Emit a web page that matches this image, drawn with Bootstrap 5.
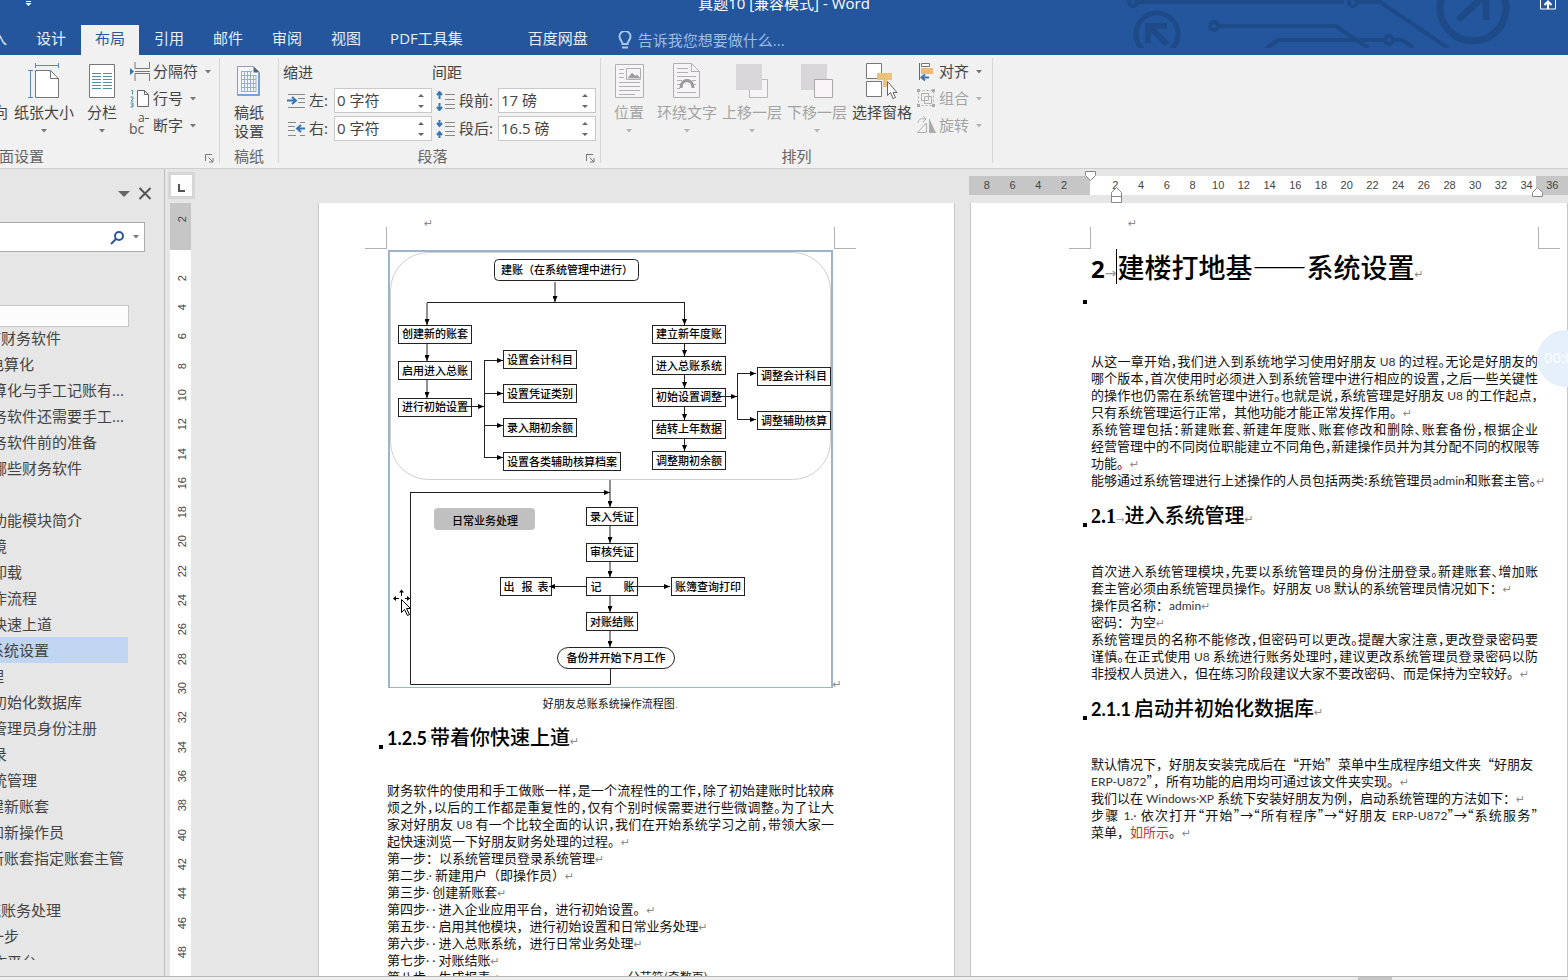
<!DOCTYPE html>
<html lang="zh-CN">
<head>
<meta charset="utf-8">
<meta name="viewport" content="width=device-width, initial-scale=1">
<title>真题10 [兼容模式] - Word</title>
<link href="https://cdn.jsdelivr.net/npm/bootstrap@5.3.0/dist/css/bootstrap.min.css" rel="stylesheet">
<style>
body{font-family:"Open Sans","Noto Sans CJK SC",sans-serif;font-size:15px;line-height:19px;color:#444;background:#e6e6e6}
svg{display:block;flex:none}
button,input{font:inherit;color:inherit}
button{border:0;background:none;padding:0;white-space:nowrap}
/* title bar and tabs */
.topbar{background:#24569e;color:#fff;height:55px}
.deco{right:0;top:0}
.titleline{height:25px;line-height:7px}
.titleline .win{right:12px;top:0}
.qat{left:24px;top:0}
.tabs{gap:1px;margin-left:-37px;height:30px}
.tabs a{color:#e4eefb;text-decoration:none;padding:4px 14px 0;white-space:nowrap}
.tabs a.active{background:#f1f1f1;color:#2b579a}
.tabs .extra{margin-left:36px}
.tell{color:#9dbce6;margin-left:15px;gap:6px}
/* ribbon */
.ribbon{background:#f1f1f1;border-bottom:1px solid #cdcdcd;height:114px}
.grp{border-right:1px solid #d5d5d5;margin:3px 0 5px}
.grp-page{width:220px}
.grp-para{width:322px}
.grp-arr{width:392px}
.gbody{height:87px}
.glabel{height:20px;padding-top:2px;color:#666}
.glabel .cutl{margin-left:-16px}
.launch{margin:5px 5px 0 0}
.big{display:flex;flex-direction:column;align-items:center;padding-top:5px;width:60px;flex-shrink:0}
.big svg.ic{margin-bottom:4px}
.big .car{margin-top:7px}
.w56{width:56px}
.w58{width:58px}
.offleft{margin:0 6px 0 -52px}
.off{color:#a3a3a3}
.stackrow{gap:5px}
.stackrow .w56{margin-right:-5px}
.small-col button{display:flex;align-items:center;height:27px;gap:3px}
.car{width:6px;height:4px;fill:#777}
.off .car{fill:#b4b4b4}
.head-lab{height:30px;line-height:28px}
.indent{padding-left:4px;width:153px}
.spacing{width:164px}
.field{height:25px;margin-bottom:3px}
.field>svg{margin-left:4px}
.field label{margin-left:4px}
.spin{width:98px;border:1px solid #c9c9c9;background:#fff}
.spin input{border:0;outline:0;width:78px;padding:0 0 0 2px;background:none}
/* navigation pane */
.navpane{width:165px;border-right:1px solid #bdbdbd;padding-bottom:16px}
.panehead{height:32px}
.searchbox{height:30px;width:145px;border:1px solid #ababab;border-left:0;background:#fff;margin-top:22px}
.searchbox input{width:108px;border:0;outline:0;background:none}
.searchbox .car{margin:0 5px 0 8px}
.outline-root{width:129px;height:22px;border:1px solid #c6c6c6;border-left:0;background:#fcfcfc;margin-top:53px}
.outline{margin-top:-2px}
.outline a{display:block;height:26px;line-height:26px;color:#444;text-decoration:none;white-space:nowrap;width:128px;text-indent:-8px}
.outline a.d2{text-indent:-11px}
.outline a.d3{text-indent:-14px}
.outline a.sel{background:#c0d5f1}
/* rulers */
.rul{font:11px "Liberation Sans",sans-serif;color:#444}
.tabsel{width:27px;height:27px;border:3px solid #d6d6d6;background:#fdfdfd;margin:3px 0 0 3px}
.topstrip{height:34px}
.hrul{margin:7px 0 0 774px;height:19px;padding:0 3px 0 5px;background:linear-gradient(90deg,#c6c6c6 0 121px,#fff 121px calc(100% - 32px),#c6c6c6 calc(100% - 32px))}
.hrul span{flex:1 1 0;text-align:center;line-height:18px}
.marks{left:0;top:-5px}
.vrul{width:21px;margin-left:5px;padding:2px 0 9px 3px;background:linear-gradient(#c6c6c6 0 47px,#fff 47px)}
.vrul span{flex:1 1 0;writing-mode:vertical-rl;transform:rotate(180deg);text-align:center;line-height:19px}
/* pages */
.sheet{background:#fff;border:solid #c6c6c6;border-width:0 1px;color:#111;overflow:hidden;font:13px/17px "Noto Sans CJK SC",sans-serif}
.sheet-a{width:637px;margin-left:127px;padding-left:68px}
.sheet-b{margin-left:15px;padding-left:120px}
.txt{width:447px}
.corners{width:491px;margin-left:-22px;height:46px;padding-top:14px}
.corners i{width:22px;height:22px;border:0 solid #b0b0b0;align-self:flex-end}
.corners i.l{border-width:0 1px 1px 0}
.corners i.r{border-width:0 0 1px 1px}
.corners .ret{margin-left:37px;line-height:13px}
.ret{font:11px/0 "DejaVu Sans",sans-serif;color:#8a8a8a}
.sheet p{margin:0;white-space:nowrap}
.full{display:block;text-align:justify;text-align-last:justify;font-feature-settings:"halt"}
.wide{display:block}
.lt{font-family:Lato,sans-serif;font-size:12px;line-height:0;color:#333}
.sheet h1,.sheet h2,.sheet h3{position:relative;margin:0;font-size:20px;line-height:24px;font-weight:500;white-space:nowrap;color:#000}
.sheet h2,.sheet h3{margin:15px 0 35px}
.sheet-a h3{margin:13px 0 32px}
.sheet h1{font-size:27px;line-height:36px;height:36px;margin-bottom:67px}
.num{font:700 18px/0 Lato,sans-serif}
.num-serif{font:700 20px/0 "Liberation Serif",serif}
.num-big{font:700 24px/0 "Open Sans",sans-serif}
.tab{font:10px/0 "DejaVu Sans",sans-serif;color:#999}
h1 .tab{font-size:14px}
.dot{position:absolute;left:-8px;top:20px;width:4px;height:4px;background:#000}
.sheet h1 .dot{top:51px}
.caret-bar{display:inline-block;width:1px;height:35px;background:#000;vertical-align:top}
.sheet .cap{font-size:11px;width:447px;text-align:center;margin-top:6px}
.red{color:#c0392b}
.brk{font-size:12px;line-height:0;margin-left:128px}
.flow text{font:500 11px "Noto Sans CJK SC",sans-serif;text-anchor:middle;fill:#000}
.flow text.ret{font:11px "DejaVu Sans",sans-serif;fill:#8a8a8a}
.flow .bx{fill:#fff;stroke:#222}
.flow .ln{fill:none;stroke:#222}
.timer{right:-26px;top:330px;width:57px;height:57px;border-radius:50%;background:#e6f0fb;color:#fff;padding:18px 0 0 7px;line-height:19px}
.foot{height:4px;background:#ededed;border-top:1px solid #b8b8b8}
.foot div{width:34px;margin-right:176px;background:#c4c4c4}
</style>
</head>
<body>
<svg width="0" height="0" class="position-absolute" aria-hidden="true"><defs>
<symbol id="car" viewBox="0 0 6 4"><path d="M0 0h6L3 3.5z"/></symbol>
<symbol id="launch" viewBox="0 0 9 9"><path d="M.5 7V.5H7M3.500 3.500l4 4M8 4v4H4" fill="none" stroke="#777"/></symbol>
<symbol id="spin" viewBox="0 0 18 23"><path d="M5 8l3-3 3 3zM5 16l3 3 3-3z" fill="#666"/></symbol>
</defs></svg>
<div class="vh-100 d-flex flex-column overflow-hidden position-relative">
<header class="topbar position-relative overflow-hidden flex-shrink-0">
  <svg class="deco position-absolute" width="488" height="48" viewBox="0 0 488 48" fill="none" stroke="#1e4a87" stroke-width="4">
    <circle cx="77" cy="34" r="21" stroke-width="5"/><path d="M87 44L69 26" stroke-width="6"/><path d="M68 43V26h19" stroke-width="6"/>
    <circle cx="53" cy="2" r="4"/><path d="M58 2h206M278 2h22l68 46"/><circle cx="273" cy="2" r="4"/>
    <circle cx="134" cy="26" r="4"/><path d="M139 26h117l32 22M184 50l14-10h107M314 40h8l12 8"/><circle cx="309" cy="40" r="4"/>
    <circle cx="393" cy="8" r="33" stroke-width="7"/><path d="M378 20L406-6M406-10v30" stroke-width="7"/>
  </svg>
  <div class="titleline d-flex justify-content-center position-relative">
    <svg class="qat position-absolute" width="9" height="7" viewBox="0 0 9 7"><path d="M2 1h5v1H2zM1.500 3h6l-3 3z" fill="#fff"/></svg>
    <span>真题10 [兼容模式] - Word</span>
    <svg class="win position-absolute" width="16" height="10" viewBox="0 0 16 10" fill="none" stroke="#fff"><path d="M.5 0v9h15V0"/><path d="M8 9V2M4.500 5L8 1.500 11.500 5" stroke-width="2"/></svg>
  </div>
  <nav class="tabs d-flex position-relative">
    <a href="#">插入</a><a href="#">设计</a><a href="#" class="active">布局</a><a href="#">引用</a><a href="#">邮件</a><a href="#">审阅</a><a href="#">视图</a><a href="#">PDF工具集</a><a href="#" class="extra">百度网盘</a>
    <button class="tell d-flex align-items-center"><svg width="14" height="19" viewBox="0 0 14 19" fill="none" stroke="#a9c6ee" stroke-width="2"><path d="M4.500 13c0-3-3-4-3-7.500a5.500 5.500 0 0 1 11 0c0 3.500-3 4.500-3 7.500zM4 16.500h6"/></svg>告诉我您想要做什么...</button>
  </nav>
</header>

<section class="ribbon d-flex flex-shrink-0">
  <div class="grp grp-page">
    <div class="gbody d-flex">
      <button class="big offleft"><svg class="ic" width="30" height="36"></svg>纸张方向</button>
      <button class="big"><svg class="ic" width="32" height="36" viewBox="0 0 32 36" fill="none"><path d="M7 2.500h24M7.500 0v5M30.500 0v5M2.500 7v28M0 7.500h5M0 34.500h5" stroke="#5b87b5"/><path d="M7.500 7.500h15l8 8v19h-23z" fill="#fff" stroke="#777"/><path d="M22.500 7.500v8h8" stroke="#777"/></svg>纸张大小<svg class="car"><use href="#car"/></svg></button>
      <button class="big w56"><svg class="ic" width="28" height="36" viewBox="0 0 28 36" fill="none"><path d="M1.500 1.500h25v33h-25z" fill="#fff" stroke="#777"/><path d="M4 10.500h9M4 13.500h9M4 16.500h9M4 19.500h9M4 22.500h9M4 25.500h9M15 10.500h9M15 13.500h9M15 16.500h9M15 19.500h9M15 22.500h9M15 25.500h9" stroke="#4f91a5"/></svg>分栏<svg class="car"><use href="#car"/></svg></button>
      <div class="small-col">
        <button><svg width="20" height="19" viewBox="0 0 20 19" fill="none"><path d="M5 0v6.500h14.500V0M5 19v-7.500h14.500V19M5 9.500h15" stroke="#777"/><path d="M0 6l4 3.500L0 13z" fill="#2f6fab"/></svg>分隔符<svg class="car ms-1"><use href="#car"/></svg></button>
        <button><svg width="20" height="19" viewBox="0 0 20 19" fill="none"><path d="M7.500 1.500h7l4 4v12h-11z" fill="#fff" stroke="#666"/><path d="M14.500 1.500v4h4" stroke="#666"/><path d="M1 1.500h1.500v4M.5 8h2.500v2l-2 2h2.500M.5 14h2.500v4H.5M1 16h2" stroke="#4f91a5"/></svg>行号<svg class="car ms-1"><use href="#car"/></svg></button>
        <button><svg width="20" height="19" viewBox="0 0 20 19" fill="#555" overflow="visible" font-family="Open Sans,sans-serif"><text x="-1" y="18" font-size="14">bc</text><text x="8" y="6" font-size="12">a</text><path d="M15 2h4v1h-4z"/></svg>断字<svg class="car ms-1"><use href="#car"/></svg></button>
      </div>
    </div>
    <div class="glabel d-flex justify-content-between"><span class="cutl">页面设置</span><button class="launch" aria-label="页面设置选项"><svg width="9" height="9"><use href="#launch"/></svg></button></div>
  </div>
  <div class="grp">
    <div class="gbody"><button class="big w58"><svg class="ic" width="24" height="36" viewBox="0 0 24 36" fill="none"><path d="M.5 3.500h16l6 6v23H.5z" fill="#f4f8fd" stroke="#8f9bb0"/><path d="M22 10v22H1" stroke="#7ba0d8" stroke-width="2"/><path d="M16.500 3.500v6h6z" fill="#55637c"/><path d="M4 8.500h11M4 12.500h15M4 16.500h15M4 20.500h15M4 24.500h15M4 28.500h15M4.500 8v21M7.500 8v21M10.500 8v21M13.500 8v21M16.500 12v17M19 12v17" stroke="#98acd0"/></svg><span>稿纸<br>设置</span></button></div>
    <div class="glabel text-center">稿纸</div>
  </div>
  <div class="grp grp-para">
    <div class="gbody d-flex">
      <div class="indent">
        <div class="head-lab">缩进</div>
        <div class="field d-flex align-items-center"><svg width="18" height="16" viewBox="0 0 18 16" fill="none"><path d="M1 1.500h17M11 5.500h7M11 9.500h7M1 14.500h17" stroke="#888"/><path d="M0 7.500h8M5 4l4 3.500L5 11" stroke="#3a76b4" stroke-width="2"/></svg><label for="il">左:</label><div class="spin d-flex ms-auto"><input id="il" value="0 字符"><svg width="18" height="23"><use href="#spin"/></svg></div></div>
        <div class="field d-flex align-items-center"><svg width="18" height="16" viewBox="0 0 18 16" fill="none"><path d="M1 1.500h8M13 1.500h5M1 5.500h7M1 9.500h7M1 14.500h8M13 14.500h5" stroke="#888"/><path d="M18 7.500h-7M14 4l-4 3.500L14 11" stroke="#3a76b4" stroke-width="2"/></svg><label for="ir">右:</label><div class="spin d-flex ms-auto"><input id="ir" value="0 字符"><svg width="18" height="23"><use href="#spin"/></svg></div></div>
      </div>
      <div class="spacing">
        <div class="head-lab">间距</div>
        <div class="field d-flex align-items-center"><svg width="19" height="20" viewBox="0 0 19 20" fill="none"><path d="M9 3.500h10M9 8.500h10M9 13.500h10M9 17.500h10" stroke="#888"/><path d="M3.500 1v7M3.500 12v7M1 4l2.500-3L6 4M1 16l2.500 3L6 16" stroke="#3a76b4" stroke-width="2"/></svg><label for="sb">段前:</label><div class="spin d-flex ms-auto"><input id="sb" value="17 磅"><svg width="18" height="23"><use href="#spin"/></svg></div></div>
        <div class="field d-flex align-items-center"><svg width="19" height="20" viewBox="0 0 19 20" fill="none"><path d="M9 3.500h10M9 7.500h10M9 12.500h10M9 16.500h10" stroke="#888"/><path d="M3.500 1v6M3.500 13v6M1 4l2.500 3L6 4M1 16l2.500-3L6 16" stroke="#3a76b4" stroke-width="2"/></svg><label for="sa">段后:</label><div class="spin d-flex ms-auto"><input id="sa" value="16.5 磅"><svg width="18" height="23"><use href="#spin"/></svg></div></div>
      </div>
    </div>
    <div class="glabel d-flex justify-content-end"><span class="mx-auto">段落</span><button class="launch" aria-label="段落选项"><svg width="9" height="9"><use href="#launch"/></svg></button></div>
  </div>
  <div class="grp grp-arr">
    <div class="gbody d-flex stackrow">
      <button class="big off w56"><svg class="ic" width="30" height="36" viewBox="0 0 30 36" fill="none" stroke="#b0b0b0"><path d="M1.500 1.500h28v33h-28z" fill="#f6f4f6"/><path d="M12.500 5.500h14v11h-14z"/><path d="M14 15l4-5 3 3 2-1 3 3z" fill="#999"/><path d="M5 6.500h5M5 10.500h5M5 14.500h5M5 19.500h21M5 23.500h21M5 27.500h21M5 31.500h16"/></svg>位置<svg class="car"><use href="#car"/></svg></button>
      <button class="big off"><svg class="ic" width="28" height="36" viewBox="0 0 28 36" fill="none" stroke="#b0b0b0"><path d="M.5.500h18l8 8v26H.5z" fill="#f6f4f6"/><path d="M18.500.500v8h8M4 5.500h11M4 9.500h11M4 13.500h19M4 17.500h5M19 17.500h4M4 21.500h3M4 25.500h3M21 21.500h2M4 29.500h19"/><path d="M8 25c0-10 12-10 12 0" stroke="#999" stroke-width="3"/></svg>环绕文字<svg class="car"><use href="#car"/></svg></button>
      <button class="big off"><svg class="ic" width="32" height="36" viewBox="0 0 32 36"><path d="M13.500 16.500h18v18h-18z" fill="#f6f4f6" stroke="#b8b8b8"/><path d="M0 1h26v26H0z" fill="#d8d6d8"/></svg>上移一层<svg class="car"><use href="#car"/></svg></button>
      <button class="big off"><svg class="ic" width="32" height="36" viewBox="0 0 32 36"><path d="M0 1h26v26H0z" fill="#d8d6d8"/><path d="M13.500 16.500h18v18h-18z" fill="#f8f4f8" stroke="#a8a8a8"/></svg>下移一层<svg class="car"><use href="#car"/></svg></button>
      <button class="big"><svg class="ic" width="32" height="36" viewBox="0 0 32 36"><path d="M.5.500h15v15H.5zM.5 18.500h15v15H.5z" fill="#fff" stroke="#777"/><path d="M11 10h15v7H11zM17 17h4v7h-4z" fill="#efc178"/><path d="M21.500 18.500v14l3-3 2.500 6 2.500-1-2.500-5h4z" fill="#fff" stroke="#666"/></svg>选择窗格</button>
      <div class="small-col">
        <button><svg width="19" height="19" viewBox="0 0 19 19" fill="none"><path d="M2.500 1v17" stroke="#666"/><path d="M4.500 1.500h8v3h-8z" fill="#fff" stroke="#777"/><path d="M4 6h12v6H4z" fill="#efb978"/><path d="M5 15.500h7M8 12.500l-3.500 3L8 18.500" stroke="#3a76b4" stroke-width="2"/></svg>对齐<svg class="car ms-1"><use href="#car"/></svg></button>
        <button class="off"><svg width="19" height="19" viewBox="0 0 19 19" fill="none" stroke="#b0b0b0"><path d="M1.500 1.500h15v15h-15z" stroke-dasharray="2 2"/><path d="M4.500 4.500h7v7h-7zM7.500 7.500h7v7h-7z"/><path d="M0 0h3v3H0zM15 0h3v3h-3zM0 15h3v3H0zM15 15h3v3h-3z" fill="#aaa" stroke="none"/></svg>组合<svg class="car ms-1"><use href="#car"/></svg></button>
        <button class="off"><svg width="19" height="19" viewBox="0 0 19 19" fill="none" stroke="#b0b0b0"><path d="M9.500 7v9.500H.500zM1 7c0-4 4-5 7-4M6 0l3 3-3 3"/><path d="M12 2v15h7z" fill="#aaa" stroke="none"/></svg>旋转<svg class="car ms-1"><use href="#car"/></svg></button>
      </div>
    </div>
    <div class="glabel text-center">排列</div>
  </div>
</section>

<main class="d-flex flex-fill overflow-hidden">
  <aside class="navpane flex-shrink-0 d-flex flex-column overflow-hidden">
    <div class="panehead d-flex justify-content-end align-items-end pe-2">
      <button aria-label="窗格选项"><svg width="12" height="13" viewBox="0 0 12 13"><path d="M0 4h12l-6 6z" fill="#666"/></svg></button>
      <button aria-label="关闭" class="ms-2 me-1"><svg width="14" height="13" viewBox="0 0 14 13"><path d="M1.500 1l11 11M12.500 1l-11 11" stroke="#555" stroke-width="2"/></svg></button>
    </div>
    <div class="searchbox d-flex align-items-center flex-shrink-0"><input aria-label="搜索文档"><svg class="ms-auto" width="15" height="15" viewBox="0 0 15 15" fill="none" stroke="#2f5496" stroke-width="2"><circle cx="9" cy="6" r="4"/><path d="M6 9l-5 5"/></svg><svg class="car"><use href="#car"/></svg></div>
    <div class="outline-root flex-shrink-0"></div>
    <nav class="outline overflow-hidden">
      <a href="#" class="d3">何财务软件</a><a href="#" class="d2">电算化</a><a href="#">算化与手工记账有...</a><a href="#">务软件还需要手工...</a><a href="#">务软件前的准备</a><a href="#">哪些财务软件</a><a href="#">&nbsp;</a><a href="#">功能模块简介</a><a href="#">境</a><a href="#">卸载</a><a href="#">作流程</a><a href="#">快速上道</a><a href="#" class="d2 sel">系统设置</a><a href="#" class="d2">理</a><a href="#">初始化数据库</a><a href="#">管理员身份注册</a><a href="#">录</a><a href="#">统管理</a><a href="#" class="d2">建新账套</a><a href="#" class="d2">加新操作员</a><a href="#" class="d2">新账套指定账套主管</a><a href="#">&nbsp;</a><a href="#" class="d3">统账务处理</a><a href="#" class="d2">一步</a><a href="#">作平台</a>
    </nav>
  </aside>

  <div class="flex-fill d-flex flex-column overflow-hidden">
    <div class="topstrip d-flex flex-shrink-0">
      <div class="tabsel"><svg width="21" height="21" viewBox="0 0 21 21"><path d="M8 9v7h6" fill="none" stroke="#555" stroke-width="2"/></svg></div>
      <div class="hrul rul d-flex flex-fill position-relative">
        <span>8</span><span>6</span><span>4</span><span>2</span><span></span><span>2</span><span>4</span><span>6</span><span>8</span><span>10</span><span>12</span><span>14</span><span>16</span><span>18</span><span>20</span><span>22</span><span>24</span><span>26</span><span>28</span><span>30</span><span>32</span><span>34</span><span>36</span>
        <svg class="marks position-absolute" width="599" height="32" viewBox="969 171 599 32" fill="#fff" stroke="#888"><path d="M1085.500 171.500h10v4l-5 5-5-5zM1111.500 202.500v-10l5-5 5 5v10zM1111.500 196.500h10M1532.500 196.500v-4l5-5 5 5v4z"/></svg>
      </div>
    </div>
    <div class="d-flex flex-fill overflow-hidden">
      <div class="vrul rul d-flex flex-column flex-shrink-0">
        <span>2</span><span></span><span>2</span><span>4</span><span>6</span><span>8</span><span>10</span><span>12</span><span>14</span><span>16</span><span>18</span><span>20</span><span>22</span><span>24</span><span>26</span><span>28</span><span>30</span><span>32</span><span>34</span><span>36</span><span>38</span><span>40</span><span>42</span><span>44</span><span>46</span><span>48</span>
      </div>
      <article class="sheet sheet-a flex-shrink-0">
        <div class="corners d-flex"><i class="l"></i><span class="ret">↵</span><i class="r ms-auto"></i></div>
        <svg class="flow" width="456" height="440" viewBox="387 249 456 440">
          <defs><marker id="ah" viewBox="0 0 8 6" refX="8" refY="3" markerWidth="6" markerHeight="5" orient="auto" markerUnits="userSpaceOnUse" preserveAspectRatio="none"><path d="M0 0l8 3-8 3z"/></marker></defs>
          <path d="M389 687.500V251M832 251v436.500" stroke="#9db4c8" stroke-width="2"/><path d="M388 251h445" stroke="#9db4c8" stroke-width="2"/><path d="M388 687.500h445" stroke="#9db4c8"/>
          <rect x="390.500" y="252.500" width="440" height="227" rx="38" fill="none" stroke="#cfcfcf"/>
          <g class="bx">
            <rect x="494.500" y="259.500" width="144" height="21" rx="4"/>
            <rect x="398.500" y="325.500" width="73" height="18"/><rect x="398.500" y="361.500" width="73" height="18"/><rect x="398.500" y="398.500" width="73" height="18"/>
            <rect x="503.500" y="350.500" width="73" height="18"/><rect x="503.500" y="384.500" width="73" height="18"/><rect x="503.500" y="418.500" width="73" height="18"/><rect x="503.500" y="452.500" width="117" height="18"/>
            <rect x="652.500" y="325.500" width="73" height="18"/><rect x="652.500" y="356.500" width="73" height="18"/><rect x="652.500" y="388.500" width="73" height="18"/><rect x="652.500" y="420.500" width="73" height="18"/><rect x="652.500" y="451.500" width="73" height="18"/>
            <rect x="757.500" y="367.500" width="73" height="18"/><rect x="757.500" y="411.500" width="73" height="18"/>
            <rect x="586.500" y="507.500" width="51" height="18"/><rect x="586.500" y="543.500" width="51" height="18"/><rect x="586.500" y="577.500" width="51" height="18"/><rect x="586.500" y="612.500" width="51" height="18"/>
            <rect x="500.500" y="577.500" width="51" height="18"/><rect x="671.500" y="577.500" width="73" height="18"/>
            <rect x="557.500" y="647.500" width="117" height="21" rx="11"/>
          </g>
          <rect x="434" y="508" width="101" height="22" rx="4" fill="#c0c0c0"/>
          <g class="ln">
            <path d="M427 302.500h258"/><path d="M484.500 360.500v97"/><path d="M737.500 373.500v46"/><path d="M610.500 669v15.500H410.500v-192"/>
            <g marker-end="url(#ah)">
              <path d="M555 282v20"/><path d="M427 303v22"/><path d="M684.500 303v22"/><path d="M427 344v17"/><path d="M427 380v18"/><path d="M684.500 344v12"/><path d="M684.500 375v13"/><path d="M684.500 407v13"/><path d="M684.500 439v12"/>
              <path d="M466 406.500h18"/><path d="M484 360.500h19"/><path d="M484 393.500h19"/><path d="M484 425.500h19"/><path d="M484 457.500h19"/>
              <path d="M719 396.500h18"/><path d="M737 373.500h19"/><path d="M737 419.500h19"/>
              <path d="M610 480v27"/><path d="M410 492.500h200"/><path d="M610 526v17"/><path d="M610 562v15"/><path d="M610 596v16"/><path d="M610 631v16"/>
              <path d="M586 586.500h-37"/><path d="M630 586.500h40"/>
            </g>
          </g>
          <text x="567" y="274">建账（在系统管理中进行）</text>
          <text x="435" y="338">创建新的账套</text><text x="435" y="375">启用进入总账</text><text x="435" y="411">进行初始设置</text>
          <text x="540" y="364">设置会计科目</text><text x="540" y="398">设置凭证类别</text><text x="540" y="432">录入期初余额</text><text x="562" y="466">设置各类辅助核算档案</text>
          <text x="689" y="338">建立新年度账</text><text x="689" y="370">进入总账系统</text><text x="689" y="401">初始设置调整</text><text x="689" y="433">结转上年数据</text><text x="689" y="465">调整期初余额</text>
          <text x="794" y="380">调整会计科目</text><text x="794" y="425">调整辅助核算</text>
          <text x="485" y="525">日常业务处理</text>
          <text x="612" y="521">录入凭证</text><text x="612" y="556">审核凭证</text><text x="596" y="591">记</text><text x="629" y="591">账</text><text x="612" y="626">对账结账</text>
          <text x="509" y="591">出</text><text x="527" y="591">报</text><text x="543" y="591">表</text><text x="708" y="591">账簿查询打印</text><text x="616" y="662">备份并开始下月工作</text>
          <text class="ret" x="837" y="688">↵</text>
          <g stroke="#000" fill="#000"><path d="M401.500 591v5M394 598.500h5M405 598.500h5"/><path d="M399 592.500l2.500-3 2.500 3zM396 596l-3 2.500 3 2.500zM407 596l3 2.500-3 2.500z" stroke="none"/><path d="M401.500 599.500v13l3-3 3 6 2-1-3-6h4z" fill="#fff"/></g>
        </svg>
        <p class="cap">好朋友总账系统操作流程图<span class="ret">.</span></p>
        <h3><i class="dot"></i><span class="num">1.2.5</span><span class="tab">·</span>带着你快速上道<span class="ret">↵</span></h3>
        <div class="txt">
          <p><span class="full">财务软件的使用和手工做账一样，是一个流程性的工作，除了初始建账时比较麻</span><span class="full">烦之外，以后的工作都是重复性的，仅有个别时候需要进行些微调整。为了让大</span><span class="full">家对好朋友 <span class="lt">U8</span> 有一个比较全面的认识，我们在开始系统学习之前，带领大家一</span>起快速浏览一下好朋友财务处理的过程。<span class="ret">↵</span></p>
          <p>第一步：以系统管理员登录系统管理<span class="ret">↵</span></p>
          <p>第二步<span class="lt">.· </span>新建用户（即操作员）<span class="ret">↵</span></p>
          <p>第三步<span class="lt">· </span>创建新账套<span class="ret">↵</span></p>
          <p>第四步<span class="lt">· · </span>进入企业应用平台，进行初始设置。<span class="ret">↵</span></p>
          <p>第五步<span class="lt">· · </span>启用其他模块，进行初始设置和日常业务处理<span class="ret">↵</span></p>
          <p>第六步<span class="lt">· · </span>进入总账系统，进行日常业务处理<span class="ret">↵</span></p>
          <p>第七步<span class="lt">· · </span>对账结账<span class="ret">↵</span></p>
          <p>第八步<span class="lt">· · </span>生成报表<span class="ret">↵</span><span class="brk">分节符(奇数页)</span></p>
        </div>
      </article>
      <article class="sheet sheet-b flex-fill">
        <div class="corners d-flex"><i class="l"></i><span class="ret">↵</span><i class="r ms-auto"></i></div>
        <h1><i class="dot"></i><span class="num-big">2</span><span class="tab">→</span><span class="caret-bar"></span>建楼打地基——系统设置<span class="ret">↵</span></h1>
        <div class="txt">
          <p><span class="full">从这一章开始，我们进入到系统地学习使用好朋友 <span class="lt">U8</span> 的过程。无论是好朋友的</span><span class="full">哪个版本，首次使用时必须进入到系统管理中进行相应的设置，之后一些关键性</span><span class="full">的操作也仍需在系统管理中进行。也就是说，系统管理是好朋友 <span class="lt">U8</span> 的工作起点，</span>只有系统管理运行正常，其他功能才能正常发挥作用。<span class="ret">↵</span></p>
          <p><span class="full">系统管理包括：新建账套、新建年度账、账套修改和删除、账套备份，根据企业</span><span class="full">经营管理中的不同岗位职能建立不同角色，新建操作员并为其分配不同的权限等</span>功能。<span class="ret">↵</span></p>
          <p><span class="full">能够通过系统管理进行上述操作的人员包括两类:系统管理员<span class="lt">admin</span>和账套主管。<span class="ret">↵</span></span></p>
        </div>
        <h2><i class="dot"></i><span class="num-serif">2.1</span><span class="tab">→</span>进入系统管理<span class="ret">↵</span></h2>
        <div class="txt">
          <p><span class="full">首次进入系统管理模块，先要以系统管理员的身份注册登录。新建账套、增加账</span>套主管必须由系统管理员操作。好朋友 <span class="lt">U8</span> 默认的系统管理员情况如下：<span class="ret">↵</span></p>
          <p>操作员名称：<span class="lt">admin</span><span class="ret">↵</span></p>
          <p>密码：为空<span class="ret">↵</span></p>
          <p><span class="full">系统管理员的名称不能修改，但密码可以更改。提醒大家注意，更改登录密码要</span><span class="full">谨慎。在正式使用 <span class="lt">U8</span> 系统进行账务处理时，建议更改系统管理员登录密码以防</span>非授权人员进入，但在练习阶段建议大家不要改密码、而是保持为空较好。<span class="ret">↵</span></p>
        </div>
        <h3><i class="dot"></i><span class="num">2.1.1</span><span class="tab">·</span>启动并初始化数据库<span class="ret">↵</span></h3>
        <div class="txt">
          <p><span class="wide">默认情况下，好朋友安装完成后在“开始”菜单中生成程序组文件夹“好朋友</span><span class="lt">ERP-U872</span>”，所有功能的启用均可通过该文件夹实现。<span class="ret">↵</span></p>
          <p>我们以在 <span class="lt">Windows·XP</span> 系统下安装好朋友为例，启动系统管理的方法如下：<span class="ret">↵</span></p>
          <p><span class="full">步骤 <span class="lt">1.· </span>依次打开“开始”→“所有程序”→“好朋友 <span class="lt">ERP-U872</span>”→“系统服务”</span>菜单，<span class="red">如所示</span>。<span class="ret">↵</span></p>
        </div>
      </article>
    </div>
  </div>
</main>
<footer class="foot d-flex justify-content-end flex-shrink-0"><div></div></footer>
<div class="timer position-absolute">00:0</div>
</div>
<script src="https://cdn.jsdelivr.net/npm/bootstrap@5.3.0/dist/js/bootstrap.bundle.min.js"></script>
</body>
</html>
